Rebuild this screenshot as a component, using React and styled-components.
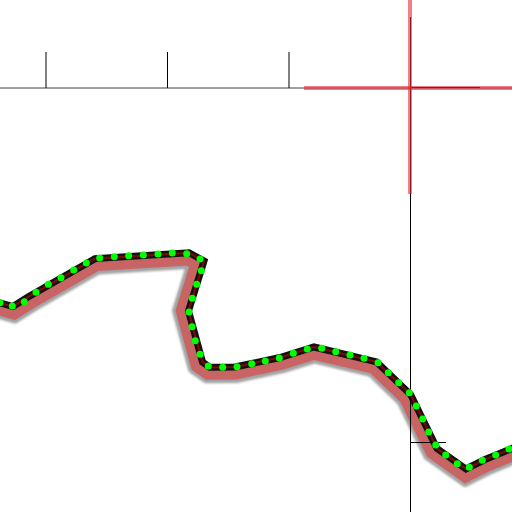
import React from "react";
import styled, { createGlobalStyle } from "styled-components";

const GlobalStyle = createGlobalStyle`
  html, body { margin: 0; padding: 0; background: #ffffff; }
  body { font-family: "Liberation Sans", Arial, sans-serif; }
`;

const Stage = styled.div`
  width: 512px;
  height: 512px;
  overflow: hidden;
  background: #ffffff;
`;

const Chart = styled.svg`
  display: block;
  width: 512px;
  height: 512px;
`;

const route = [
  [-10, 300], [13, 306.5], [28, 297], [95, 258.6], [189, 252.8], [204, 261],
  [188.5, 311], [202.5, 362], [210, 367.3], [235, 367], [280, 357.5], [314, 347],
  [376.6, 361.9], [410.6, 394.5], [437, 448.5], [466, 469], [485, 459.5], [525, 443],
];

const dots = [
  [0, 302.7], [12.3, 306], [24.3, 301.7], [36, 292.3], [48.3, 284.3], [61, 277.7],
  [73.7, 270], [86.3, 263], [99.7, 258], [114.3, 256.7], [128.7, 255.7], [143.3, 255],
  [158, 254], [172.3, 253], [186.7, 253.7], [200, 259], [201.3, 270.7], [196.7, 284.3],
  [192.3, 298.3], [189, 312], [192, 326.7], [195.3, 340.7], [200, 354.3], [208.3, 366],
  [222.7, 367.3], [237, 366.7], [251.7, 363.7], [265.3, 361], [279.3, 358], [293.3, 353.3],
  [307.3, 349], [321.7, 348.3], [335.7, 351.7], [350, 355], [364, 358.3], [378, 362.7],
  [388.3, 372.7], [398.7, 382.7], [409.3, 392.7], [416.3, 406], [422.7, 419], [428.7, 432],
  [435.7, 445], [445.7, 455], [457.3, 463.7], [469.3, 467.3], [482.3, 460.3], [495.7, 455],
  [509, 449],
];

function offsetLine(pts, d) {
  const normals = [];
  for (let i = 0; i < pts.length - 1; i++) {
    const dx = pts[i + 1][0] - pts[i][0];
    const dy = pts[i + 1][1] - pts[i][1];
    const L = Math.hypot(dx, dy);
    normals.push([-dy / L, dx / L]);
  }
  return pts.map((p, i) => {
    if (i === 0) return [p[0] + normals[0][0] * d, p[1] + normals[0][1] * d];
    if (i === pts.length - 1) {
      const n = normals[normals.length - 1];
      return [p[0] + n[0] * d, p[1] + n[1] * d];
    }
    const n1 = normals[i - 1];
    const n2 = normals[i];
    let mx = n1[0] + n2[0];
    let my = n1[1] + n2[1];
    const ml = Math.hypot(mx, my) || 1;
    mx /= ml;
    my /= ml;
    let k = d / (mx * n1[0] + my * n1[1]);
    if (Math.abs(k) > Math.abs(d) * 3) k = Math.sign(k) * Math.abs(d) * 3;
    return [p[0] + mx * k, p[1] + my * k];
  });
}

const toPoints = (pts) => pts.map((p) => `${p[0].toFixed(2)},${p[1].toFixed(2)}`).join(" ");

const shadowPts = toPoints(offsetLine(route, 11.5));
const offsetPts = toPoints(offsetLine(route, 7.5));
const routePts = toPoints(route);

const ticks = [46, 167.5, 289];

export default function App() {
  return (
    <Stage>
      <GlobalStyle />
      <Chart viewBox="0 0 512 512" xmlns="http://www.w3.org/2000/svg">
        <defs>
          <filter id="soft" x="-10%" y="-10%" width="120%" height="120%">
            <feGaussianBlur stdDeviation="1.2" />
          </filter>
        </defs>

        {/* scale axis */}
        <line x1="0" y1="88" x2="512" y2="88" stroke="#000" strokeOpacity="0.75" strokeWidth="1" />
        {ticks.map((x) => (
          <line key={x} x1={x} y1="52" x2={x} y2="88" stroke="#000" strokeWidth="1" />
        ))}

        {/* crosshair black under */}
        <line x1="410.5" y1="17" x2="410.5" y2="512" stroke="#000" strokeWidth="1" />
        <line x1="410" y1="87.5" x2="480" y2="87.5" stroke="#000" strokeWidth="1" />

        {/* crosshair red overlay */}
        <line x1="304" y1="88" x2="512" y2="88" stroke="rgb(235,40,50)" strokeOpacity="0.6" strokeWidth="4" />
        <line x1="410" y1="0" x2="410" y2="194" stroke="rgb(235,40,50)" strokeOpacity="0.6" strokeWidth="4" />

        {/* route: shadow, offset band, main line */}
        <polyline
          points={shadowPts}
          fill="none"
          stroke="#8c8c8c"
          strokeOpacity="0.8"
          strokeWidth="9"
          strokeLinejoin="round"
          filter="url(#soft)"
        />
        <polyline
          points={offsetPts}
          fill="none"
          stroke="#c86464"
          strokeWidth="10"
          strokeLinejoin="miter"
          strokeMiterlimit="4"
        />
        <polyline
          points={routePts}
          fill="none"
          stroke="#111"
          strokeWidth="7"
          strokeLinejoin="miter"
          strokeMiterlimit="4"
        />
        <polyline
          points={routePts}
          fill="none"
          stroke="#7a0a0a"
          strokeWidth="2.2"
          strokeLinejoin="miter"
        />

        <line x1="410.5" y1="360" x2="410.5" y2="512" stroke="#000" strokeWidth="1" />
        <line x1="410" y1="442.5" x2="446" y2="442.5" stroke="#000" strokeWidth="1" />

        {dots.map(([x, y], i) => (
          <circle key={i} cx={x} cy={y} r="3.5" fill="#00ff00" />
        ))}
      </Chart>
    </Stage>
  );
}
